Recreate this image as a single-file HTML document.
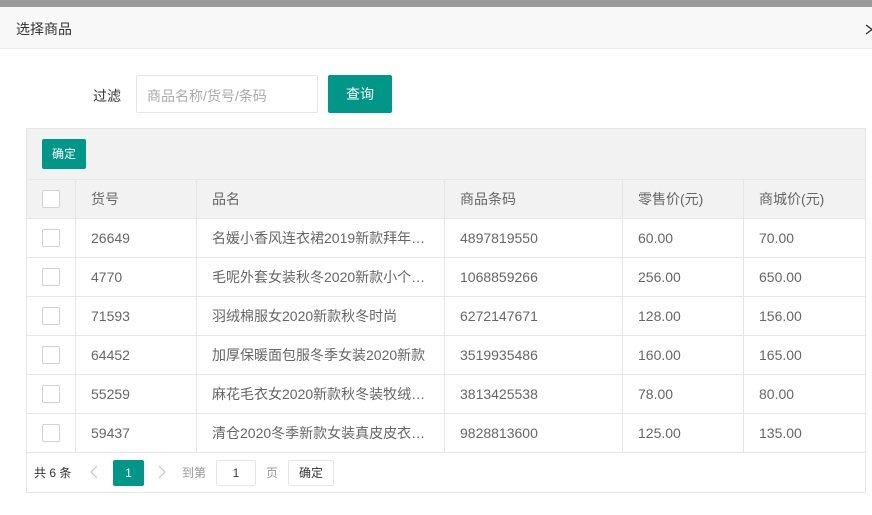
<!DOCTYPE html>
<html><head><meta charset="utf-8"><style>
*{margin:0;padding:0;box-sizing:border-box}
body{width:872px;height:515px;overflow:hidden;background:#fff;font-family:"Liberation Sans","Noto Sans CJK SC",sans-serif;font-size:14px;color:#666;position:relative}
.a{position:absolute}
.top{left:0;top:0;width:872px;height:7px;background:#9a9a9a}
.hd{left:0;top:7px;width:872px;height:42px;background:#f8f8f8;border-bottom:1px solid #eee}
.hd span{position:absolute;left:16px;top:12px;color:#333;font-size:14px}
.x{left:865px;top:24px;width:10px;height:11px}
.lbl{left:93px;top:86px;color:#333}
.inp{left:136px;top:75px;width:182px;height:38px;border:1px solid #e6e6e6;border-radius:2px;color:#aaa;padding:10px 0 0 10px}
.btn{left:328px;top:75px;width:64px;height:38px;background:#009688;color:#fff;border-radius:2px;text-align:center;line-height:38px}
.tb{left:26px;top:128px;width:840px;height:365px;border:1px solid #e6e6e6}
.tool{left:27px;top:129px;width:838px;height:51px;background:#f2f2f2;border-bottom:1px solid #e6e6e6}
.ok{left:42px;top:139px;width:44px;height:30px;background:#009688;color:#fff;font-size:12px;text-align:center;line-height:30px;border-radius:2px}
.row{position:absolute;left:27px;width:838px;height:39px;border-bottom:1px solid #e6e6e6}
.row.h{background:#f2f2f2}
.c{position:absolute;top:0;height:38px;line-height:38px;border-left:1px solid #e6e6e6;padding-left:15px;white-space:nowrap;overflow:hidden}
.cb{position:absolute;left:15px;top:10px;width:18px;height:18px;border:1px solid #d2d2d2;background:#fff;border-radius:2px}
</style></head><body>
<div class="a top"></div>
<div class="a hd"><span>选择商品</span></div>
<svg class="a x" viewBox="0 0 10 11"><path d="M1 1L7 5.5L1 10" stroke="#333" stroke-width="1.4" fill="none"/></svg>
<div class="a lbl">过滤</div>
<div class="a inp">商品名称/货号/条码</div>
<div class="a btn">查询</div>
<div class="a tb"></div>
<div class="a tool"></div>
<div class="a ok">确定</div>

<div class="row h" style="top:180px"><div class="cb"></div><div class="c" style="left:48px;width:121px">货号</div><div class="c" style="left:169px;width:248px">品名</div><div class="c" style="left:417px;width:178px">商品条码</div><div class="c" style="left:595px;width:121px">零售价(元)</div><div class="c" style="left:716px;width:122px">商城价(元)</div></div>

<div class="row" style="top:219px"><div class="cb"></div><div class="c" style="left:48px;width:121px">26649</div><div class="c" style="left:169px;width:248px">名媛小香风连衣裙2019新款拜年…</div><div class="c" style="left:417px;width:178px">4897819550</div><div class="c" style="left:595px;width:121px">60.00</div><div class="c" style="left:716px;width:122px">70.00</div></div>
<div class="row" style="top:258px"><div class="cb"></div><div class="c" style="left:48px;width:121px">4770</div><div class="c" style="left:169px;width:248px">毛呢外套女装秋冬2020新款小个…</div><div class="c" style="left:417px;width:178px">1068859266</div><div class="c" style="left:595px;width:121px">256.00</div><div class="c" style="left:716px;width:122px">650.00</div></div>
<div class="row" style="top:297px"><div class="cb"></div><div class="c" style="left:48px;width:121px">71593</div><div class="c" style="left:169px;width:248px">羽绒棉服女2020新款秋冬时尚</div><div class="c" style="left:417px;width:178px">6272147671</div><div class="c" style="left:595px;width:121px">128.00</div><div class="c" style="left:716px;width:122px">156.00</div></div>
<div class="row" style="top:336px"><div class="cb"></div><div class="c" style="left:48px;width:121px">64452</div><div class="c" style="left:169px;width:248px">加厚保暖面包服冬季女装2020新款</div><div class="c" style="left:417px;width:178px">3519935486</div><div class="c" style="left:595px;width:121px">160.00</div><div class="c" style="left:716px;width:122px">165.00</div></div>
<div class="row" style="top:375px"><div class="cb"></div><div class="c" style="left:48px;width:121px">55259</div><div class="c" style="left:169px;width:248px">麻花毛衣女2020新款秋冬装牧绒…</div><div class="c" style="left:417px;width:178px">3813425538</div><div class="c" style="left:595px;width:121px">78.00</div><div class="c" style="left:716px;width:122px">80.00</div></div>
<div class="row" style="top:414px"><div class="cb"></div><div class="c" style="left:48px;width:121px">59437</div><div class="c" style="left:169px;width:248px">清仓2020冬季新款女装真皮皮衣…</div><div class="c" style="left:417px;width:178px">9828813600</div><div class="c" style="left:595px;width:121px">125.00</div><div class="c" style="left:716px;width:122px">135.00</div></div>

<div class="a" style="left:34px;top:464px;font-size:12px;color:#333">共 6 条</div>
<svg class="a" style="left:90px;top:465px" width="8" height="14" viewBox="0 0 8 14"><path d="M7 1L1 7L7 13" stroke="#ccc" stroke-width="1.3" fill="none"/></svg>
<div class="a" style="left:113px;top:460px;width:31px;height:26px;background:#009688;color:#fff;text-align:center;line-height:26px;font-size:12px;border-radius:2px">1</div>
<svg class="a" style="left:158px;top:465px" width="8" height="14" viewBox="0 0 8 14"><path d="M1 1L7 7L1 13" stroke="#ccc" stroke-width="1.3" fill="none"/></svg>
<div class="a" style="left:182px;top:464px;font-size:12px;color:#999">到第</div>
<div class="a" style="left:216px;top:460px;width:40px;height:26px;border:1px solid #e6e6e6;border-radius:2px;text-align:center;line-height:24px;font-size:12px;color:#333">1</div>
<div class="a" style="left:266px;top:464px;font-size:12px;color:#999">页</div>
<div class="a" style="left:288px;top:460px;width:46px;height:26px;border:1px solid #e6e6e6;border-radius:2px;text-align:center;line-height:24px;font-size:12px;color:#333">确定</div>
</body></html>
